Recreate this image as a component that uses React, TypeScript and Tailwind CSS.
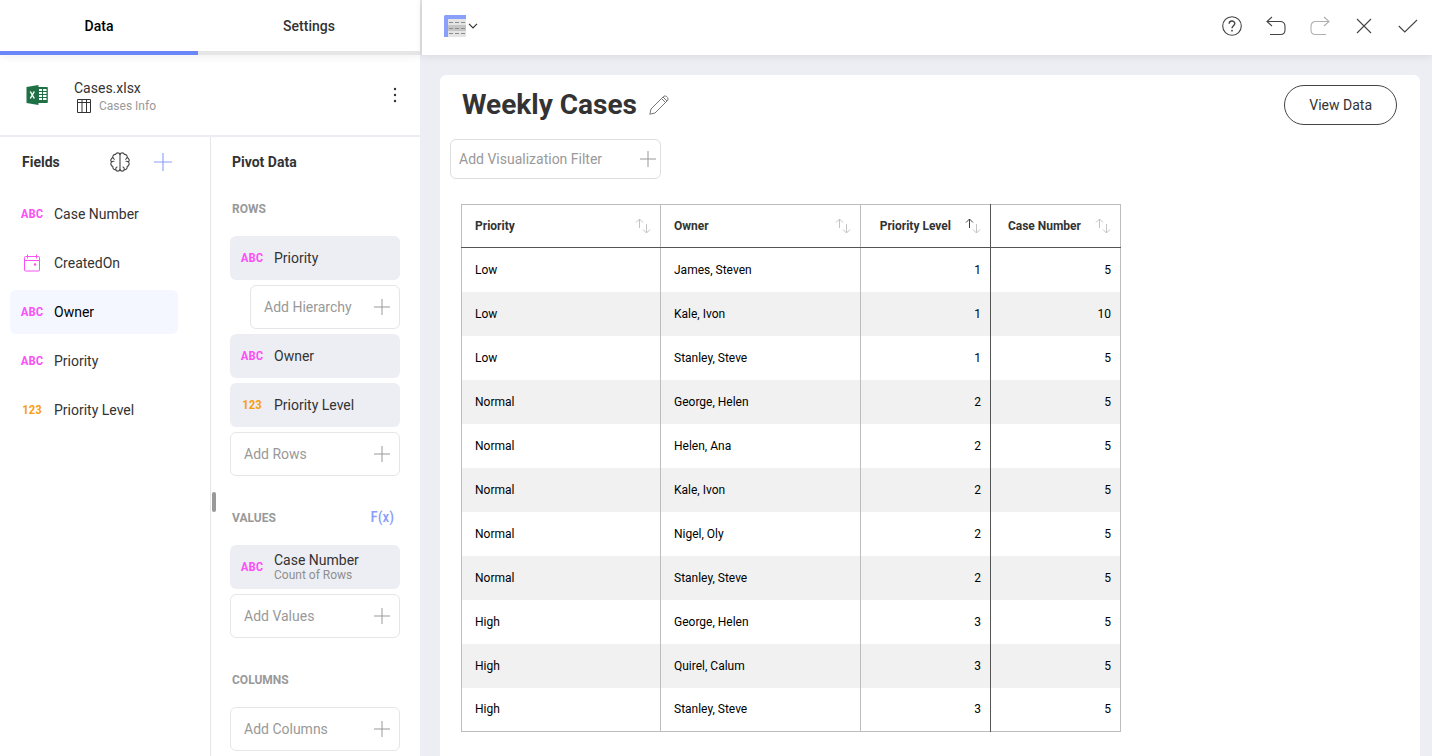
import React from 'react';

type Kind = 'text' | 'number' | 'date';

const rows: [string, string, number, number][] = [
  ['Low', 'James, Steven', 1, 5],
  ['Low', 'Kale, Ivon', 1, 10],
  ['Low', 'Stanley, Steve', 1, 5],
  ['Normal', 'George, Helen', 2, 5],
  ['Normal', 'Helen, Ana', 2, 5],
  ['Normal', 'Kale, Ivon', 2, 5],
  ['Normal', 'Nigel, Oly', 2, 5],
  ['Normal', 'Stanley, Steve', 2, 5],
  ['High', 'George, Helen', 3, 5],
  ['High', 'Quirel, Calum', 3, 5],
  ['High', 'Stanley, Steve', 3, 5],
];

const fields: { name: string; kind: Kind; active?: boolean }[] = [
  { name: 'Case Number', kind: 'text' },
  { name: 'CreatedOn', kind: 'date' },
  { name: 'Owner', kind: 'text', active: true },
  { name: 'Priority', kind: 'text' },
  { name: 'Priority Level', kind: 'number' },
];

function PlusIcon({ className = 'size-4' }: { className?: string }) {
  return (
    <svg viewBox="0 0 16 16" className={className} fill="none" stroke="currentColor" aria-hidden="true">
      <path d="M8 0v16M0 8h16" />
    </svg>
  );
}

function KindIcon({ kind }: { kind: Kind }) {
  if (kind === 'date') {
    return (
      <span className="flex w-5 shrink-0 justify-center text-[#fb51f7]">
        <svg viewBox="0 0 18 18" className="size-[18px]" fill="none" stroke="currentColor" aria-hidden="true">
          <rect x="1.5" y="2.5" width="15" height="14.5" rx="1" />
          <path d="M1.5 6.5h15M4.5 0.5v4M13.5 0.5v4" />
          <circle cx="12" cy="10.5" r="1.2" fill="currentColor" stroke="none" />
        </svg>
      </span>
    );
  }
  return (
    <span
      className={`flex w-5 shrink-0 justify-center font-['Roboto_Condensed','Liberation_Sans_Narrow',Roboto,sans-serif] text-[13px] font-semibold ${kind === 'text' ? 'text-[#fb51f7]' : 'text-[#fb9d0c]'}`}
    >
      {kind === 'text' ? 'ABC' : '123'}
    </span>
  );
}

function Pill({ kind, label, note }: { kind: Kind; label: string; note?: string }) {
  return (
    <button className="flex h-11 w-full items-center gap-3 rounded-md bg-[#edeef4] px-3 text-left">
      <KindIcon kind={kind} />
      <span className="flex flex-col">
        <span className={note ? 'leading-4' : ''}>{label}</span>
        {note && <span className="text-xs leading-[14px] text-[#8e8e8e]">{note}</span>}
      </span>
    </button>
  );
}

function AddBox({ label, indent }: { label: string; indent?: boolean }) {
  return (
    <button
      className={`flex h-11 items-center justify-between self-stretch rounded-md border border-[#e6e6e6] pr-[9px] pl-[13px] text-[#999] ${indent ? 'ml-5' : ''}`}
    >
      {label}
      <PlusIcon />
    </button>
  );
}

function Section({ title, extra, children }: { title: string; extra?: React.ReactNode; children: React.ReactNode }) {
  return (
    <section>
      <div className="flex h-[55px] items-center justify-between pr-1.5 pl-0.5">
        <h3 className="text-xs font-bold text-[#999]">{title}</h3>
        {extra}
      </div>
      <div className="flex flex-col gap-[5px]">{children}</div>
    </section>
  );
}

function SortIcon({ up }: { up?: boolean }) {
  return (
    <svg viewBox="0 0 16 16" className="size-4 shrink-0" fill="none" aria-hidden="true">
      <path d="M4.5 10V1M1 4.5 4.5 1 8 4.5" stroke={up ? '#444' : '#c4c4c4'} />
      <path d="M11.5 6v9M8 11.5l3.500 3.500 3.500-3.500" stroke="#c4c4c4" />
    </svg>
  );
}

function HeadCell({ label, right, up }: { label: string; right?: boolean; up?: boolean }) {
  return (
    <th scope="col" aria-sort={up ? 'ascending' : 'none'} className={`border border-[#bdbdbd] border-b-[#555] p-0 ${up ? 'border-r-[#555]' : ''}`}>
      <button className={`flex h-[42px] w-full items-center pr-[9px] pl-[13px] font-bold ${right ? 'justify-end gap-3.5' : 'justify-between'}`}>
        {label}
        <SortIcon up={up} />
      </button>
    </th>
  );
}

function ExcelIcon() {
  return (
    <svg viewBox="0 0 22 20" className="h-5 w-[22px]" aria-hidden="true">
      <path d="M12 2h9q.8 0 .8.8v14.400q0 .8-.8.8h-9z" fill="#1f7145" />
      <path d="M.5 2 12.500 0v20L.5 18z" fill="#1f7145" />
      <path d="M13 4h3v2h-3zM17 4h3.500v2H17zM13 7h3v2h-3zM17 7h3.500v2H17zM13 10h3v2h-3zM17 10h3.500v2H17zM13 13h3v2h-3zM17 13h3.500v2H17z" fill="#fff" />
      <path d="m4.300 6.500 4 7M8.300 6.500l-4 7" stroke="#fff" strokeWidth="1.500" />
    </svg>
  );
}

function BrainIcon() {
  return (
    <svg viewBox="0 0 20 20" className="size-5" fill="none" stroke="#444" strokeWidth="1.100" strokeLinecap="round" strokeLinejoin="round" aria-hidden="true">
      <path d="M10 2.300v15.400" />
      <path d="M10 2.300C9.200.4 6.300.4 5.700 2.400 3.800 2.200 2.500 3.700 2.900 5.500.9 6.300.2 8.500 1.500 10 .2 11.500.9 13.700 2.900 14.500c-.4 1.800.9 3.300 2.800 3.100.6 2 3.500 2 4.300.1" />
      <path d="M10 2.300c.8-1.900 3.700-1.900 4.300.1 1.900-.2 3.200 1.300 2.800 3.100 2 .8 2.700 3 1.400 4.500 1.300 1.500.6 3.700-1.400 4.500.4 1.800-.9 3.300-2.800 3.100-.6 2-3.500 2-4.300.1" />
      <path d="M2.900 5.500c.2.900.7 1.400 1.400 1.700M17.100 5.500c-.2.900-.7 1.400-1.400 1.700M1.500 10c.8-.7 1.600-.9 2.500-.8M18.500 10c-.8-.7-1.600-.9-2.500-.8M5.700 17.600c-.2-1.300.3-2.200 1.300-2.600M14.300 17.600c.2-1.300-.3-2.200-1.300-2.600" />
    </svg>
  );
}

function Toolbar() {
  return (
    <header className="relative flex h-[55px] shrink-0 items-center justify-between bg-white pr-3.5 pb-[3px] pl-[22px] text-[#444] shadow-[0_2px_8px_rgba(0,0,0,0.08)]">
      <button aria-label="Change visualization" className="flex items-center gap-0.5">
        <svg viewBox="0 0 22 22" className="size-[22px]" aria-hidden="true">
          <path d="M4 4h18v18H4z" fill="#e4e4e4" />
          <path d="M4 10h18v6H4z" fill="#c5c5c5" />
          <path d="M22 0H1.500Q0 0 0 1.500V22h4V4h18z" fill="#8a9ffa" />
          <path d="M5 7.500h4M11 7.500h4M17 7.500h4M5 13.500h4M11 13.500h4M17 13.500h4M5 18.500h4M11 18.500h4M17 18.500h4" stroke="#8b8b8b" />
        </svg>
        <svg viewBox="0 0 10 6" className="h-1.5 w-2.5" fill="none" stroke="#333" strokeWidth="1.200" aria-hidden="true">
          <path d="m1 .8 4 4 4-4" />
        </svg>
      </button>
      <div className="flex items-center gap-6">
        <button aria-label="Help">
          <svg viewBox="0 0 20 20" className="size-5" fill="none" stroke="currentColor" strokeWidth="1.100" aria-hidden="true">
            <circle cx="10" cy="10" r="9.300" />
            <path d="M7.200 7.700C7.200 4.200 12.800 4.200 12.800 7.600 12.800 9.500 10 9.900 10 12.200" strokeWidth="1.400" />
            <circle cx="10" cy="14.700" r=".9" fill="currentColor" stroke="none" />
          </svg>
        </button>
        <button aria-label="Undo">
          <svg viewBox="0 0 20 20" className="size-5" fill="none" stroke="currentColor" strokeWidth="1.100" aria-hidden="true">
            <path d="M6 1 1 5.500 6 10M1 5.500h13q5 0 5 5v3.500q0 4.500-4.500 4.500H4" />
          </svg>
        </button>
        <button aria-label="Redo" className="text-[#b0b0b0]">
          <svg viewBox="0 0 20 20" className="size-5" fill="none" stroke="currentColor" strokeWidth="1.100" aria-hidden="true">
            <path d="m14 1 5 4.500-5 4.500M19 5.500H6q-5 0-5 5v3.500q0 4.500 4.500 4.500H16" />
          </svg>
        </button>
        <button aria-label="Close">
          <svg viewBox="0 0 20 20" className="size-5" fill="none" stroke="currentColor" strokeWidth="1.100" aria-hidden="true">
            <path d="m3 3 14 14M17 3 3 17" />
          </svg>
        </button>
        <button aria-label="Apply">
          <svg viewBox="0 0 20 20" className="size-5" fill="none" stroke="currentColor" strokeWidth="1.100" aria-hidden="true">
            <path d="m.8 10 6 6L19 4" />
          </svg>
        </button>
      </div>
    </header>
  );
}

function DataPanel() {
  return (
    <aside className="flex w-[420px] shrink-0 flex-col bg-white">
      <nav className="relative flex h-[55px] shrink-0 font-medium shadow-[0_2px_8px_rgba(0,0,0,0.06)]">
        <button className="w-[198px] border-b-4 border-[#6b86f7] text-black">Data</button>
        <button className="flex-1 border-b-4 border-[#e6e6e6]">Settings</button>
      </nav>
      <div className="flex h-20 shrink-0 items-center pr-4 pl-[26px]">
        <ExcelIcon />
        <div className="ml-[26px] flex-1 pt-0.5">
          <div className="leading-5">Cases.xlsx</div>
          <div className="flex items-center gap-2 pl-[3px] text-xs text-[#999]">
            <svg viewBox="0 0 14 14" className="size-3.5" fill="none" stroke="#333" aria-hidden="true">
              <path d="M.5.500h13v13H.5zM.5 3.500h13M5 .5v13M9.500.5v13" />
            </svg>
            Cases Info
          </div>
        </div>
        <button aria-label="More options" className="flex w-[18px] justify-center">
          <svg viewBox="0 0 4 16" className="h-4 w-1" fill="#333" aria-hidden="true">
            <circle cx="2" cy="2" r="1.200" />
            <circle cx="2" cy="8" r="1.200" />
            <circle cx="2" cy="14" r="1.200" />
          </svg>
        </button>
      </div>
      <div className="flex min-h-0 flex-1 border-t-2 border-[#edeef4]">
        <div className="flex w-[210px] shrink-0 flex-col">
          <div className="flex h-[50px] items-center pl-[22px]">
            <h2 className="flex-1 font-bold">Fields</h2>
            <button aria-label="Machine learning" className="mr-6">
              <BrainIcon />
            </button>
            <button aria-label="Add field" className="mr-[38px] text-[#8a9ffa]">
              <PlusIcon className="size-[18px]" />
            </button>
          </div>
          <ul className="mt-[5px] flex flex-col gap-[5px] pr-8 pl-2.5">
            {fields.map((f) => (
              <li key={f.name}>
                <button className={`flex h-11 w-full items-center gap-3 rounded-md px-3 ${f.active ? 'bg-[#f4f7ff] text-black' : ''}`}>
                  <KindIcon kind={f.kind} />
                  {f.name}
                </button>
              </li>
            ))}
          </ul>
        </div>
        <div className="flex w-5 shrink-0 items-center border-l border-[#e6e6e6] pt-[111px]">
          <div className="ml-px h-5 w-1 rounded-full bg-[#999]" />
        </div>
        <div className="min-w-0 flex-1 overflow-hidden pr-5">
          <h2 className="flex h-11 items-center pt-1.5 pl-0.5 font-bold">Pivot Data</h2>
          <div className="flex flex-col gap-3.5">
            <Section title="ROWS">
              <Pill kind="text" label="Priority" />
              <AddBox label="Add Hierarchy" indent />
              <Pill kind="text" label="Owner" />
              <Pill kind="number" label="Priority Level" />
              <AddBox label="Add Rows" />
            </Section>
            <Section
              title="VALUES"
              extra={<button className="font-['Roboto_Condensed','Liberation_Sans_Narrow',Roboto,sans-serif] text-[15px] font-medium text-[#8a9ffa]">F(x)</button>}
            >
              <Pill kind="text" label="Case Number" note="Count of Rows" />
              <AddBox label="Add Values" />
            </Section>
            <Section title="COLUMNS">
              <AddBox label="Add Columns" />
            </Section>
          </div>
        </div>
      </div>
    </aside>
  );
}

export default function App() {
  return (
    <div className="flex h-screen overflow-hidden bg-[#edeef4] font-[Roboto,sans-serif] text-sm text-[#333]">
      <DataPanel />
      <div className="flex min-w-0 flex-1 flex-col">
        <div className="flex">
          <div className="w-0.5 bg-[#e4e4e6]" />
          <div className="min-w-0 flex-1">
            <Toolbar />
          </div>
        </div>
        <main className="mt-5 mr-3 ml-5 flex-1 rounded-t-md bg-white">
          <div className="flex items-start justify-between pt-2.5 pr-[23px] pl-[22px]">
            <div className="flex h-10 items-center gap-3">
              <h1 className="text-[28px] font-bold">Weekly Cases</h1>
              <button aria-label="Edit title">
                <svg viewBox="0 0 20 20" className="size-5" fill="none" stroke="#777" strokeLinejoin="round" aria-hidden="true">
                  <path d="M.8 19.200 2 14 14.500 1.500Q16 .2 17.500 1.500l1 1q1.300 1.500 0 3L6 18zM12.500 3.500l4 4M14 2l4 4" />
                </svg>
              </button>
            </div>
            <button className="h-10 rounded-full border border-[#444] px-6">View Data</button>
          </div>
          <button className="mt-3.5 ml-2.5 flex h-10 w-[211px] items-center justify-between rounded-md border border-[#dedede] pr-1 pl-2 text-[#999]">
            Add Visualization Filter
            <PlusIcon />
          </button>
          <table className="mt-[25px] ml-[21px] w-[659px] table-fixed border-collapse text-xs text-black">
            <colgroup>
              <col className="w-[199px]" />
              <col className="w-[200px]" />
              <col className="w-[130px]" />
              <col className="w-[130px]" />
            </colgroup>
            <thead className="text-[#333]">
              <tr>
                <HeadCell label="Priority" />
                <HeadCell label="Owner" />
                <HeadCell label="Priority Level" right up />
                <HeadCell label="Case Number" right />
              </tr>
            </thead>
            <tbody className="border-b border-[#bdbdbd]">
              {rows.map(([priority, owner, level, count], i) => (
                <tr key={i} className="h-11 even:bg-[#f1f1f1]">
                  <td className="border-x border-[#bdbdbd] pl-[13px]">{priority}</td>
                  <td className="border-x border-[#bdbdbd] pl-[13px]">{owner}</td>
                  <td className="border-x border-[#bdbdbd] border-r-[#555] pr-[9px] text-right">{level}</td>
                  <td className="border-x border-[#bdbdbd] border-l-[#555] pr-[9px] text-right">{count}</td>
                </tr>
              ))}
            </tbody>
          </table>
        </main>
      </div>
    </div>
  );
}
